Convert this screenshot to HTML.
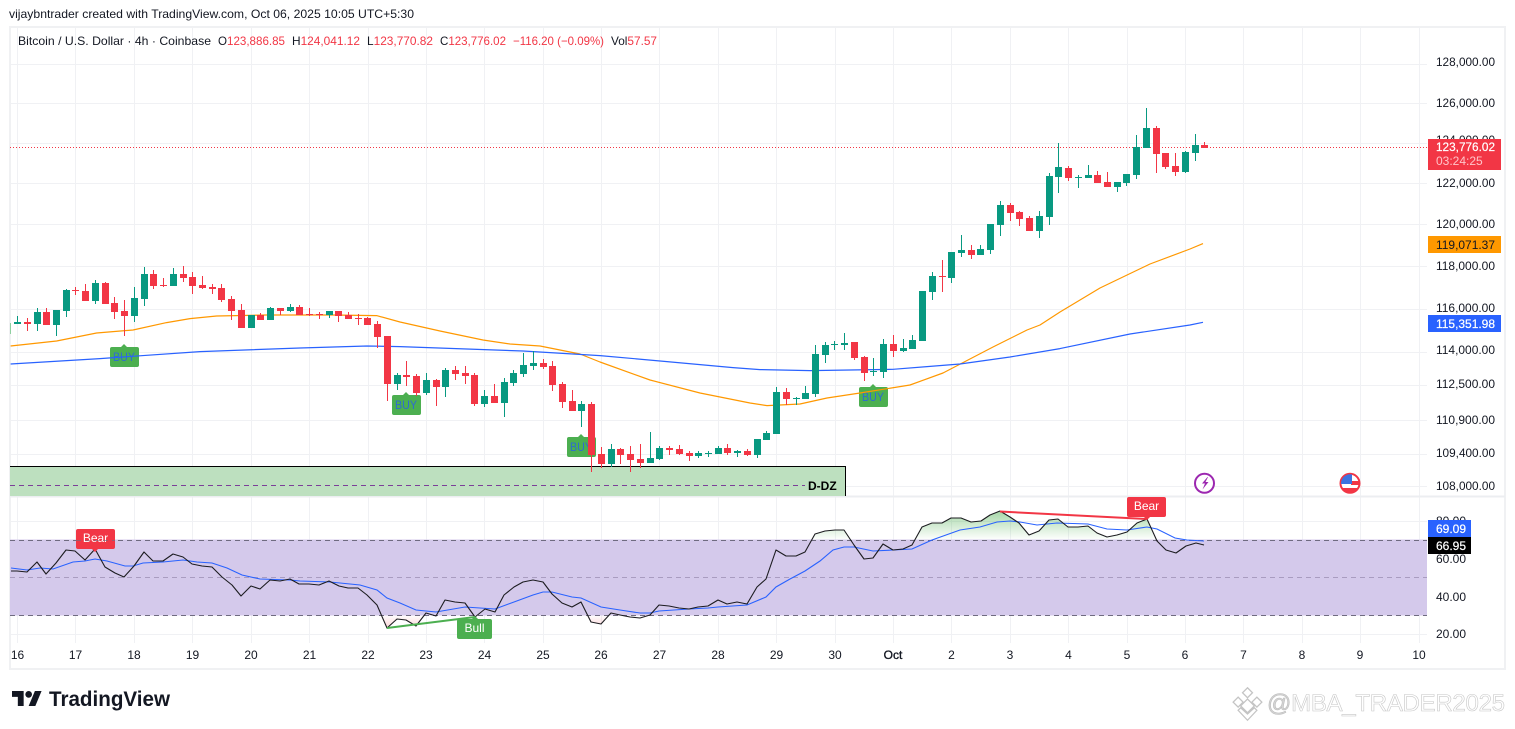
<!DOCTYPE html>
<html><head><meta charset="utf-8"><title>BTCUSD</title>
<style>
html,body{margin:0;padding:0;background:#fff;width:1515px;height:729px;overflow:hidden}
svg{display:block}
text{font-family:"Liberation Sans",sans-serif;font-size:12px;fill:#131722}
</style></head><body>
<svg width="1515" height="729" viewBox="0 0 1515 729" xmlns="http://www.w3.org/2000/svg">
<defs>
<linearGradient id="gu" gradientUnits="userSpaceOnUse" x1="0" y1="511" x2="0" y2="540"><stop offset="0" stop-color="#4caf50" stop-opacity=".5"/><stop offset="1" stop-color="#4caf50" stop-opacity="0"/></linearGradient>
<linearGradient id="gd" gradientUnits="userSpaceOnUse" x1="0" y1="615" x2="0" y2="630"><stop offset="0" stop-color="#f23645" stop-opacity="0"/><stop offset="1" stop-color="#f23645" stop-opacity=".25"/></linearGradient>
<clipPath id="fc"><circle cx="1350" cy="483.3" r="9"/></clipPath>
<clipPath id="p1"><rect x="10" y="27" width="1417" height="469"/></clipPath>
</defs>
<rect width="1515" height="729" fill="#fff"/>
<text x="9" y="18" textLength="405" lengthAdjust="spacingAndGlyphs">vijaybntrader created with TradingView.com, Oct 06, 2025 10:05 UTC+5:30</text>

<!-- grid -->
<g stroke="#f0f1f4" stroke-width="1" shape-rendering="crispEdges" fill="none">
<path d="M17.5 27V643M75.5 27V643M134.5 27V643M192.5 27V643M251.5 27V643M309.5 27V643M368.5 27V643M426.5 27V643M484.5 27V643M543.5 27V643M601.5 27V643M659.5 27V643M718.5 27V643M776.5 27V643M835.5 27V643M893.5 27V643M951.5 27V643M1010.5 27V643M1068.5 27V643M1127.5 27V643M1185.5 27V643M1243.5 27V643M1302.5 27V643M1360.5 27V643M1419.5 27V643"/>
<path d="M10 64.5H1427M10 103.5H1427M10 143.5H1427M10 183.5H1427M10 224.5H1427M10 266.5H1427M10 309.5H1427M10 352.5H1427M10 385.5H1427M10 420.5H1427M10 454.5H1427M10 486.5H1427M10 521.5H1427M10 558.5H1427M10 596.5H1427M10 634.5H1427"/>
</g>
<!-- frame -->
<rect x="10" y="27" width="1495" height="642" fill="none" stroke="#f0f1f3" stroke-width="2"/>
<path d="M10 496.5H1505" stroke="#eceef1" stroke-width="2"/>

<text x="18" y="45" textLength="193" lengthAdjust="spacingAndGlyphs">Bitcoin / U.S. Dollar · 4h · Coinbase</text>
<text x="218" y="45" textLength="67" lengthAdjust="spacingAndGlyphs">O<tspan fill="#f23645" style="fill:#f23645">123,886.85</tspan></text>
<text x="292" y="45" textLength="68" lengthAdjust="spacingAndGlyphs">H<tspan fill="#f23645" style="fill:#f23645">124,041.12</tspan></text>
<text x="367" y="45" textLength="66" lengthAdjust="spacingAndGlyphs">L<tspan fill="#f23645" style="fill:#f23645">123,770.82</tspan></text>
<text x="440" y="45" textLength="66" lengthAdjust="spacingAndGlyphs">C<tspan fill="#f23645" style="fill:#f23645">123,776.02</tspan></text>
<text x="513" y="45" textLength="91" lengthAdjust="spacingAndGlyphs" style="fill:#f23645">−116.20 (−0.09%)</text>
<text x="611" y="45" textLength="46" lengthAdjust="spacingAndGlyphs">Vol<tspan fill="#f23645" style="fill:#f23645">57.57</tspan></text>

<!-- demand zone -->
<rect x="10" y="466" width="835" height="30" fill="#bde0bf"/>
<path d="M10 466.5H845.5V496" fill="none" stroke="#000" stroke-width="1" shape-rendering="crispEdges"/>
<path d="M10 485.5H805" stroke="#7b3f98" stroke-width="1" stroke-dasharray="5 4" shape-rendering="crispEdges"/>
<text x="808" y="490" style="font-weight:bold;fill:#000">D-DZ</text>

<!-- BUY labels -->
<g fill="#4caf50">
<path d="M112 347h9l3-3 3 3h10a2 2 0 0 1 2 2v16a2 2 0 0 1-2 2h-25a2 2 0 0 1-2-2v-16a2 2 0 0 1 2-2z"/>
<path d="M394 395h9l3-3 3 3h10a2 2 0 0 1 2 2v16a2 2 0 0 1-2 2h-25a2 2 0 0 1-2-2v-16a2 2 0 0 1 2-2z"/>
<path d="M569 437h9l3-3 3 3h10a2 2 0 0 1 2 2v16a2 2 0 0 1-2 2h-25a2 2 0 0 1-2-2v-16a2 2 0 0 1 2-2z"/>
<path d="M861 387h9l3-3 3 3h10a2 2 0 0 1 2 2v16a2 2 0 0 1-2 2h-25a2 2 0 0 1-2-2v-16a2 2 0 0 1 2-2z"/>
</g>
<g>
<text x="113" y="361" textLength="22" lengthAdjust="spacingAndGlyphs" style="fill:#2f6bd0">BUY</text>
<text x="395" y="409" textLength="22" lengthAdjust="spacingAndGlyphs" style="fill:#2f6bd0">BUY</text>
<text x="570" y="451" textLength="22" lengthAdjust="spacingAndGlyphs" style="fill:#2f6bd0">BUY</text>
<text x="862" y="401" textLength="22" lengthAdjust="spacingAndGlyphs" style="fill:#2f6bd0">BUY</text>
</g>

<!-- MAs -->
<g fill="none" stroke-width="1.2" stroke-linejoin="round" clip-path="url(#p1)">
<polyline stroke="#ff9800" points="10.6,346 56.6,341 96.6,333 133,330 166.6,322.6 190,318.6 216.6,316 266,315 333,315 376.6,315.6 400,322 440,331 483,340 510,344 540,346 580,354 600,362 650,380 700,393 750,403 767,405.6 800,404 827,398 860,393 910,385 943,373 993,347 1027,330 1040,325 1060,312 1100,288 1150,264 1190,249 1203,243.6"/>
<polyline stroke="#2962ff" points="10.6,364 100,358.6 200,351.6 300,348 367,346 400,346.6 523,351 600,355.6 667,361.6 733,367.6 760,369.6 810,370.6 893,369.3 927,366.6 960,364 1010,357 1060,348.6 1130,334 1190,325 1203,322.3"/>
</g>

<!-- last price line -->
<path d="M10 147.5H1428" stroke="#f23645" stroke-width="1" stroke-dasharray="1 2" shape-rendering="crispEdges"/>

<!-- candles -->
<g fill="none" shape-rendering="crispEdges">
<rect x="10" y="323" width="1" height="11" fill="#8fd0a0"/>
<path stroke="#089981" stroke-width="1" d="M17.5 316V324M37.5 308V331M56.5 310V336M66.5 289V317M95.5 280V304M134.5 287V322M144.5 267V306M173.5 268V286M251.5 315V328M270.5 307V320M290.5 304V312M329.5 311V318M397.5 373V390M426.5 373V395M445.5 368V397M484.5 390V407M504.5 378V417M513.5 370V386M523.5 353V377M533.5 351V370M581.5 401V427M611.5 444V467M650.5 432V463M659.5 446V460M698.5 451V458M708.5 451V457M718.5 446V454M737.5 450V457M757.5 439V458M766.5 431V440M776.5 387V434M796.5 397V405M805.5 386V399M815.5 345V397M825.5 342V363M834.5 341V350M844.5 333V350M873.5 358V376M883.5 339V378M903.5 339V352M912.5 335V349M922.5 291V341M932.5 272V300M951.5 252V283M961.5 235V257M980.5 245V255M990.5 224V254M1000.5 201V236M1039.5 211V238M1049.5 173V225M1058.5 143V193M1078.5 175V188M1088.5 165V178M1117.5 182V192M1126.5 174V186M1136.5 135V179M1146.5 108V148M1185.5 151V173M1195.5 134V161"/>
<path stroke="#089981" stroke-width="7" d="M17.5 322V324M37.5 312V324M56.5 310V325M66.5 290V311M95.5 283V301M134.5 298V316M144.5 274V299M173.5 274V286M251.5 315V328M270.5 308V320M290.5 307V311M329.5 311V315M397.5 375V384M426.5 380V393M445.5 370V387M484.5 396V404M504.5 382V403M513.5 373V383M523.5 365V374M533.5 363V366M581.5 404V411M611.5 449V464M650.5 458V463M659.5 448V459M698.5 453V456M708.5 453V454M718.5 448V454M737.5 451V453M757.5 439V455M766.5 433V440M776.5 392V434M796.5 398V399M805.5 393V399M815.5 354V394M825.5 345V355M834.5 344V345M844.5 343V345M873.5 371V372M883.5 344V372M903.5 348V351M912.5 340V349M922.5 291V341M932.5 276V292M951.5 252V278M961.5 250V253M980.5 249V255M990.5 224V250M1000.5 205V225M1039.5 216V231M1049.5 176V217M1058.5 167V177M1078.5 177V178M1088.5 175V178M1117.5 182V187M1126.5 174V183M1136.5 147V175M1146.5 128V148M1185.5 152V172M1195.5 145V153"/>
<path stroke="#f23645" stroke-width="1" d="M27.5 318V331M46.5 308V325M75.5 287V295M85.5 284V301M105.5 282V304M114.5 297V319M124.5 300V336M153.5 270V289M163.5 278V287M183.5 266V282M192.5 272V294M202.5 276V289M212.5 284V294M221.5 284V302M231.5 296V320M241.5 304V328M260.5 313V320M280.5 308V315M299.5 305V315M309.5 308V316M319.5 312V319M338.5 311V322M348.5 312V319M358.5 314V325M367.5 317V325M377.5 321V348M387.5 336V401M406.5 361V386M416.5 374V396M436.5 379V406M455.5 366V380M465.5 366V384M474.5 373V406M494.5 384V403M543.5 359V369M552.5 361V391M562.5 382V408M572.5 390V411M591.5 402V472M601.5 447V468M620.5 448V464M630.5 446V472M640.5 444V468M669.5 446V455M679.5 445V455M689.5 451V461M727.5 444V455M747.5 449V456M786.5 388V405M854.5 342V360M864.5 356V381M893.5 335V357M942.5 260V292M971.5 245V259M1010.5 203V221M1019.5 211V226M1029.5 216V231M1068.5 166V181M1097.5 171V183M1107.5 172V187M1156.5 126V173M1165.5 153V169M1175.5 153V176M1204.5 142V148"/>
<path stroke="#f23645" stroke-width="7" d="M27.5 322V324M46.5 312V325M75.5 290V291M85.5 291V301M105.5 283V304M114.5 303V312M124.5 311V316M153.5 274V286M163.5 285V286M183.5 274V278M192.5 277V286M202.5 285V288M212.5 287V289M221.5 288V300M231.5 299V311M241.5 310V328M260.5 315V320M280.5 308V311M299.5 307V315M309.5 314V315M319.5 314V315M338.5 311V316M348.5 315V319M358.5 318V319M367.5 318V325M377.5 324V337M387.5 336V384M406.5 375V377M416.5 376V393M436.5 380V387M455.5 370V374M465.5 373V376M474.5 375V404M494.5 396V403M543.5 363V367M552.5 366V385M562.5 384V402M572.5 401V411M591.5 404V455M601.5 454V464M620.5 449V455M630.5 454V460M640.5 459V463M669.5 448V450M679.5 449V454M689.5 453V456M727.5 448V453M747.5 451V455M786.5 392V399M854.5 342V358M864.5 357V373M893.5 344V351M942.5 276V277M971.5 250V255M1010.5 205V213M1019.5 212V219M1029.5 218V231M1068.5 168V178M1097.5 175V183M1107.5 182V187M1156.5 128V154M1165.5 153V167M1175.5 166V172M1204.5 145V148"/>
</g>

<!-- event icons -->
<circle cx="1204.5" cy="483.3" r="9.5" fill="#fff" stroke="#9c27b0" stroke-width="2"/>
<path d="M1207.5 477l-5.500 6.500h3l-2.500 6 6-7.500h-3l2.500-5z" fill="#9c27b0"/>
<circle cx="1350" cy="483.3" r="9.5" fill="#fff" stroke="#f23645" stroke-width="2"/>
<g clip-path="url(#fc)"><rect x="1342" y="488" width="17" height="5" fill="#f23645"/><rect x="1351" y="481" width="9" height="4" fill="#f23645"/><rect x="1341" y="474" width="11" height="10" fill="#3d73e0"/></g>

<!-- RSI pane -->
<rect x="10" y="539.5" width="1417" height="76" fill="#d4c9eb"/>
<path d="M10 540.5H1427M10 615.5H1427" stroke="#6f6b80" stroke-width="1" stroke-dasharray="5 4" shape-rendering="crispEdges"/>
<path d="M10 577.5H1427" stroke="#a99cc0" stroke-width="1" stroke-dasharray="5 4" shape-rendering="crispEdges"/>

<polygon fill="url(#gu)" points="905,540 912,545 922,527 932,523 942,523 951,518 961,518 971,522 981,521 990,515 1000,511 1010,517 1019,523 1029,535 1039,531 1049,520 1058,519 1068,527 1078,527 1088,526 1097,533 1107,537 1117,535 1127,532 1137,523 1147,519 1155,540"/>
<polygon fill="url(#gu)" points="770,540 776,540 776,550 786,556 796,556 805,552 815,534 820,533 825,531 835,530 844,530 851,540"/>
<polygon fill="url(#gd)" points="380,615 387,628 397,619 406,620 416,626 423,615"/>
<polygon fill="url(#gd)" points="585,615 591,622 601,624 609,615"/>

<polyline fill="none" stroke="#2962ff" stroke-width="1.1" points="11,568 27,570 40,568 53,569 73,562 85,561 95,559 107,561 125,566 133,566 143,563 163,562 183,560 197,562 212,563 227,568 242,575 260,579 290,580 300,581 330,582 360,585 377,590 387,598 400,603 416,610 436,612 465,607 495,609 514,602 533,595 543,592 552,592 572,597 581,598 601,607 620,610 640,613 650,613 659,611 689,609 708,608 718,607 747,605 766,597 776,587 790,579 805,571 820,561 833,550 844,547 854,547 873,551 893,550 912,549 932,540 960,530 980,527 997,522 1010,521 1020,522 1037,525 1057,523 1088,524 1107,529 1127,530 1147,527 1157,529 1175,538 1187,540 1204,541"/>
<polyline fill="none" stroke="#1c1c20" stroke-width="1.1" stroke-linejoin="round" points="11,571 17,571 27,572 37,562 46,574 56,563 66,550 75,551 85,560 95,549 105,567 115,573 124,577 134,566 144,552 153,561 163,561 173,554 183,557 192,564 202,566 212,567 222,577 232,585 241,596 251,586 260,589 270,580 280,581 290,579 299,584 309,584 319,585 329,581 339,586 348,588 358,588 367,595 377,605 387,628 397,619 406,620 416,626 426,613 436,616 445,600 455,602 465,603 475,617 485,609 495,612 504,595 514,587 523,582 533,580 543,582 552,594 562,603 572,607 581,602 591,622 601,624 611,613 620,615 630,617 640,618 650,615 659,605 669,606 679,608 689,609 698,607 708,606 718,600 727,604 737,602 747,604 757,587 766,579 776,550 786,556 796,556 805,552 815,534 825,531 835,530 844,530 854,545 864,559 873,558 883,544 893,550 903,549 912,545 922,527 932,523 942,523 951,518 961,518 971,522 981,521 990,515 1000,511 1010,517 1019,523 1029,535 1039,531 1049,520 1058,519 1068,527 1078,527 1088,526 1097,533 1107,537 1117,535 1127,532 1137,523 1147,519 1157,541 1166,550 1176,553 1186,546 1196,543 1204,545"/>

<path d="M1000 511.500L1147 519" stroke="#f23645" stroke-width="2" fill="none"/>
<path d="M387 628L475 617" stroke="#4caf50" stroke-width="2" fill="none"/>

<rect x="76" y="529" width="39" height="20" rx="2" fill="#f23645"/>
<path d="M92 549h6l-3 3z" fill="#f23645"/>
<text x="95.5" y="542" text-anchor="middle" style="fill:#fff">Bear</text>
<path d="M76 540.500H115" stroke="#6f6b80" stroke-dasharray="5 4" stroke-opacity=".6" shape-rendering="crispEdges"/>
<rect x="1127" y="497" width="39" height="20" rx="2" fill="#f23645"/>
<path d="M1144 517h6l-3 3z" fill="#f23645"/>
<text x="1146.5" y="510" text-anchor="middle" style="fill:#fff">Bear</text>
<rect x="457" y="619" width="35" height="20" rx="2" fill="#4caf50"/>
<path d="M472 619h6l-3-3z" fill="#4caf50"/>
<text x="474.5" y="632" text-anchor="middle" style="fill:#fff">Bull</text>

<!-- price axis -->
<g>
<text x="1436" y="66" textLength="59" lengthAdjust="spacingAndGlyphs">128,000.00</text>
<text x="1436" y="107" textLength="59" lengthAdjust="spacingAndGlyphs">126,000.00</text>
<text x="1436" y="144" textLength="59" lengthAdjust="spacingAndGlyphs">124,000.00</text>
<text x="1436" y="187" textLength="59" lengthAdjust="spacingAndGlyphs">122,000.00</text>
<text x="1436" y="228" textLength="59" lengthAdjust="spacingAndGlyphs">120,000.00</text>
<text x="1436" y="270" textLength="59" lengthAdjust="spacingAndGlyphs">118,000.00</text>
<text x="1436" y="312" textLength="59" lengthAdjust="spacingAndGlyphs">116,000.00</text>
<text x="1436" y="354" textLength="59" lengthAdjust="spacingAndGlyphs">114,000.00</text>
<text x="1436" y="388" textLength="59" lengthAdjust="spacingAndGlyphs">112,500.00</text>
<text x="1436" y="424" textLength="59" lengthAdjust="spacingAndGlyphs">110,900.00</text>
<text x="1436" y="457" textLength="59" lengthAdjust="spacingAndGlyphs">109,400.00</text>
<text x="1436" y="490" textLength="59" lengthAdjust="spacingAndGlyphs">108,000.00</text>
<text x="1436" y="525">80.00</text>
<text x="1436" y="563">60.00</text>
<text x="1436" y="601">40.00</text>
<text x="1436" y="638">20.00</text>
</g>
<rect x="1428" y="139" width="73" height="31" fill="#f23645"/>
<text x="1436" y="151" textLength="59" lengthAdjust="spacingAndGlyphs" style="fill:#fff;stroke:#fff;stroke-width:.2">123,776.02</text>
<text x="1436" y="165" style="fill:#ffc4c9">03:24:25</text>
<rect x="1428" y="236" width="73" height="17" fill="#ff9800"/>
<text x="1436" y="249" textLength="59" lengthAdjust="spacingAndGlyphs">119,071.37</text>
<rect x="1428" y="315" width="73" height="17" fill="#2962ff"/>
<text x="1436" y="328" textLength="59" lengthAdjust="spacingAndGlyphs" style="fill:#fff;stroke:#fff;stroke-width:.2">115,351.98</text>
<rect x="1428" y="520" width="43" height="17" fill="#2962ff"/>
<text x="1436" y="533" style="fill:#fff;stroke:#fff;stroke-width:.2">69.09</text>
<rect x="1428" y="537" width="43" height="17" fill="#000"/>
<text x="1436" y="550" style="fill:#fff;stroke:#fff;stroke-width:.2">66.95</text>

<!-- time axis -->
<g text-anchor="middle">
<text x="17.5" y="659">16</text><text x="75.5" y="659">17</text><text x="134" y="659">18</text><text x="192.5" y="659">19</text><text x="251" y="659">20</text><text x="309.5" y="659">21</text><text x="368" y="659">22</text><text x="426" y="659">23</text><text x="484.5" y="659">24</text><text x="543" y="659">25</text><text x="601" y="659">26</text><text x="659.5" y="659">27</text><text x="718" y="659">28</text><text x="776.5" y="659">29</text><text x="835" y="659">30</text><text x="893" y="659" style="stroke:#131722;stroke-width:.35">Oct</text><text x="951.5" y="659">2</text><text x="1010" y="659">3</text><text x="1068.5" y="659">4</text><text x="1127" y="659">5</text><text x="1185" y="659">6</text><text x="1243.5" y="659">7</text><text x="1302" y="659">8</text><text x="1360" y="659">9</text><text x="1419" y="659">10</text>
</g>

<!-- logo -->
<g transform="translate(12 687.7) scale(.833)" fill="#131722"><path d="M14 22H7V11H0V4h14v18zM28 22h-8l7.500-18h8L28 22z"/><circle cx="20" cy="8" r="4"/></g>
<text x="49" y="706" textLength="121" lengthAdjust="spacingAndGlyphs" style="font-size:21px;font-weight:bold;fill:#131722">TradingView</text>

<!-- watermark -->
<g fill="#fff" stroke="#c4c4c4" stroke-width="1" transform="translate(1247.500 704) scale(1.25) translate(-1247.500 -703)">
<path d="M1247.500 690l4 4-4 4-4-4zM1240 697.500l4 4-4 4-4-4zM1255 697.500l4 4-4 4-4-4zM1247.500 699l5.500 5.500-5.500 5.500-5.500-5.500zM1247.500 711l-5.500-5-2 2 7.500 8 7.500-8-2-2z"/>
</g>
<text x="1267" y="711" textLength="238" style="font-size:24px;fill:#fff;stroke:#c8c8c8;stroke-width:.6"><tspan style="fill:#d4d4d4;stroke:#bdbdbd">@</tspan>MBA_TRADER2025</text>
</svg>
</body></html>
